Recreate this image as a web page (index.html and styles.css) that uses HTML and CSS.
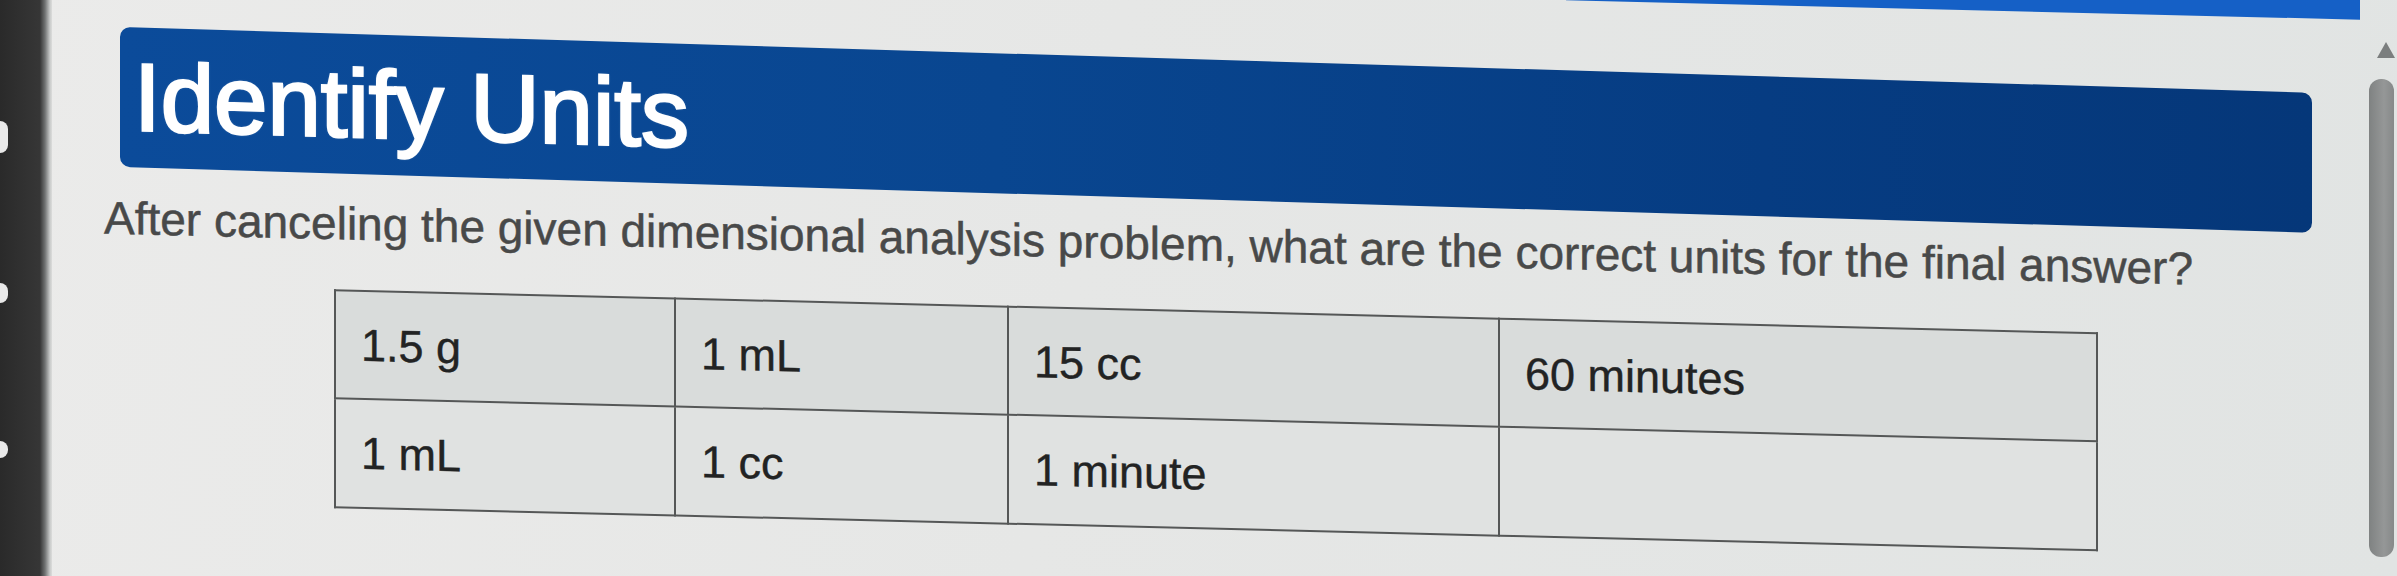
FILE: index.html
```html
<!DOCTYPE html>
<html lang="en">
<head>
<meta charset="utf-8">
<title>Identify Units</title>
<link rel="stylesheet" href="styles.css">
</head>
<body>
<div class="screen">
  <div class="bezel">
    <span class="mark m1"></span>
    <span class="mark m2"></span>
    <span class="mark m3"></span>
  </div>
  <main class="main">
    <div class="topstrip"></div>
    <h1 class="banner">Identify Units</h1>
    <p class="question">After canceling the given dimensional analysis problem, what are the correct units for the final answer?</p>
    <table class="units">
      <colgroup>
        <col class="c1"><col class="c2"><col class="c3"><col class="c4">
      </colgroup>
      <tr class="row-top">
        <td>1.5 g</td>
        <td>1 mL</td>
        <td>15 cc</td>
        <td>60 minutes</td>
      </tr>
      <tr class="row-bottom">
        <td>1 mL</td>
        <td>1 cc</td>
        <td>1 minute</td>
        <td></td>
      </tr>
    </table>
  </main>
  <div class="scroll">
    <span class="arrow"></span>
    <span class="thumb"></span>
  </div>
</div>
</body>
</html>
```

FILE: styles.css
```css
html, body {
  margin: 0;
  padding: 0;
  background: #e4e6e5;
}

body {
  font-family: "Liberation Sans", Arial, sans-serif;
}

.screen {
  display: flex;
  width: 2397px;
  height: 576px;
  overflow: hidden;
  background: linear-gradient(100deg, #ebebea 0%, #e6e7e6 45%, #e1e4e3 100%);
}

.bezel {
  width: 52px;
  flex: none;
  display: flex;
  flex-direction: column;
  background: linear-gradient(90deg, #2a2a2a 0, #363636 40px, #707272 45px, #c9cbca 50px, #e6e6e5 53px);
}

.mark {
  display: block;
  width: 8px;
  height: 20px;
  background: #e9e9e9;
  border-radius: 0 9px 9px 0;
}

.m1 { margin-top: 121px; height: 32px; }
.m2 { margin-top: 130px; }
.m3 { margin-top: 138px; height: 17px; }

.main {
  flex: 1;
  min-width: 0;
  display: flex;
  flex-direction: column;
  align-items: flex-start;
  padding-left: 52px;
  transform: skewY(1.4deg);
  transform-origin: -52px 0;
}

.topstrip {
  flex: none;
  width: 794px;
  height: 42px;
  margin: -80px 0 0 1462px;
  background: #1560c6;
}

.banner {
  flex: none;
  box-sizing: border-box;
  width: 2192px;
  height: 140px;
  margin: 62px 0 0 16px;
  padding: 22px 14px 0;
  border-radius: 10px;
  background: linear-gradient(90deg, #0b4b9a 0%, #094690 40%, #063c82 75%, #053779 100%);
  color: #ffffff;
  font-size: 96px;
  line-height: 96px;
  font-weight: normal;
  -webkit-text-stroke: 2.5px #ffffff;
  text-shadow: 0 0 3px rgba(255, 255, 255, 0.45);
  transform: skewY(0.32deg);
  transform-origin: 0 0;
}

.question {
  flex: none;
  margin: 25px 0 0 0;
  font-size: 46px;
  line-height: 52px;
  color: #484949;
  -webkit-text-stroke: 0.5px #484949;
  white-space: nowrap;
}

.units {
  flex: none;
  margin: 40px 0 0 230px;
  border-collapse: collapse;
  table-layout: fixed;
  width: 1762px;
  font-size: 45px;
  line-height: 50px;
  color: #222323;
  -webkit-text-stroke: 0.4px #222323;
}

.c1 { width: 340px; }
.c2 { width: 333px; }
.c3 { width: 491px; }
.c4 { width: 598px; }

.units td {
  border: 2px solid #555757;
  padding: 29px 25px 0;
  vertical-align: top;
  white-space: nowrap;
}

.row-top { height: 108px; background: #d9dcdb; }
.row-bottom { height: 109px; background: #e0e2e1; }

.scroll {
  width: 35px;
  flex: none;
  display: flex;
  flex-direction: column;
  align-items: flex-start;
}

.arrow {
  display: block;
  width: 0;
  height: 0;
  margin: 42px 0 0 15px;
  border-left: 9px solid transparent;
  border-right: 9px solid transparent;
  border-bottom: 16px solid #7b7e7e;
}

.thumb {
  display: block;
  width: 25px;
  height: 478px;
  margin: 21px 0 0 7px;
  border-radius: 12px;
  background: linear-gradient(90deg, #7f8282, #959797 60%, #868989);
}
```
